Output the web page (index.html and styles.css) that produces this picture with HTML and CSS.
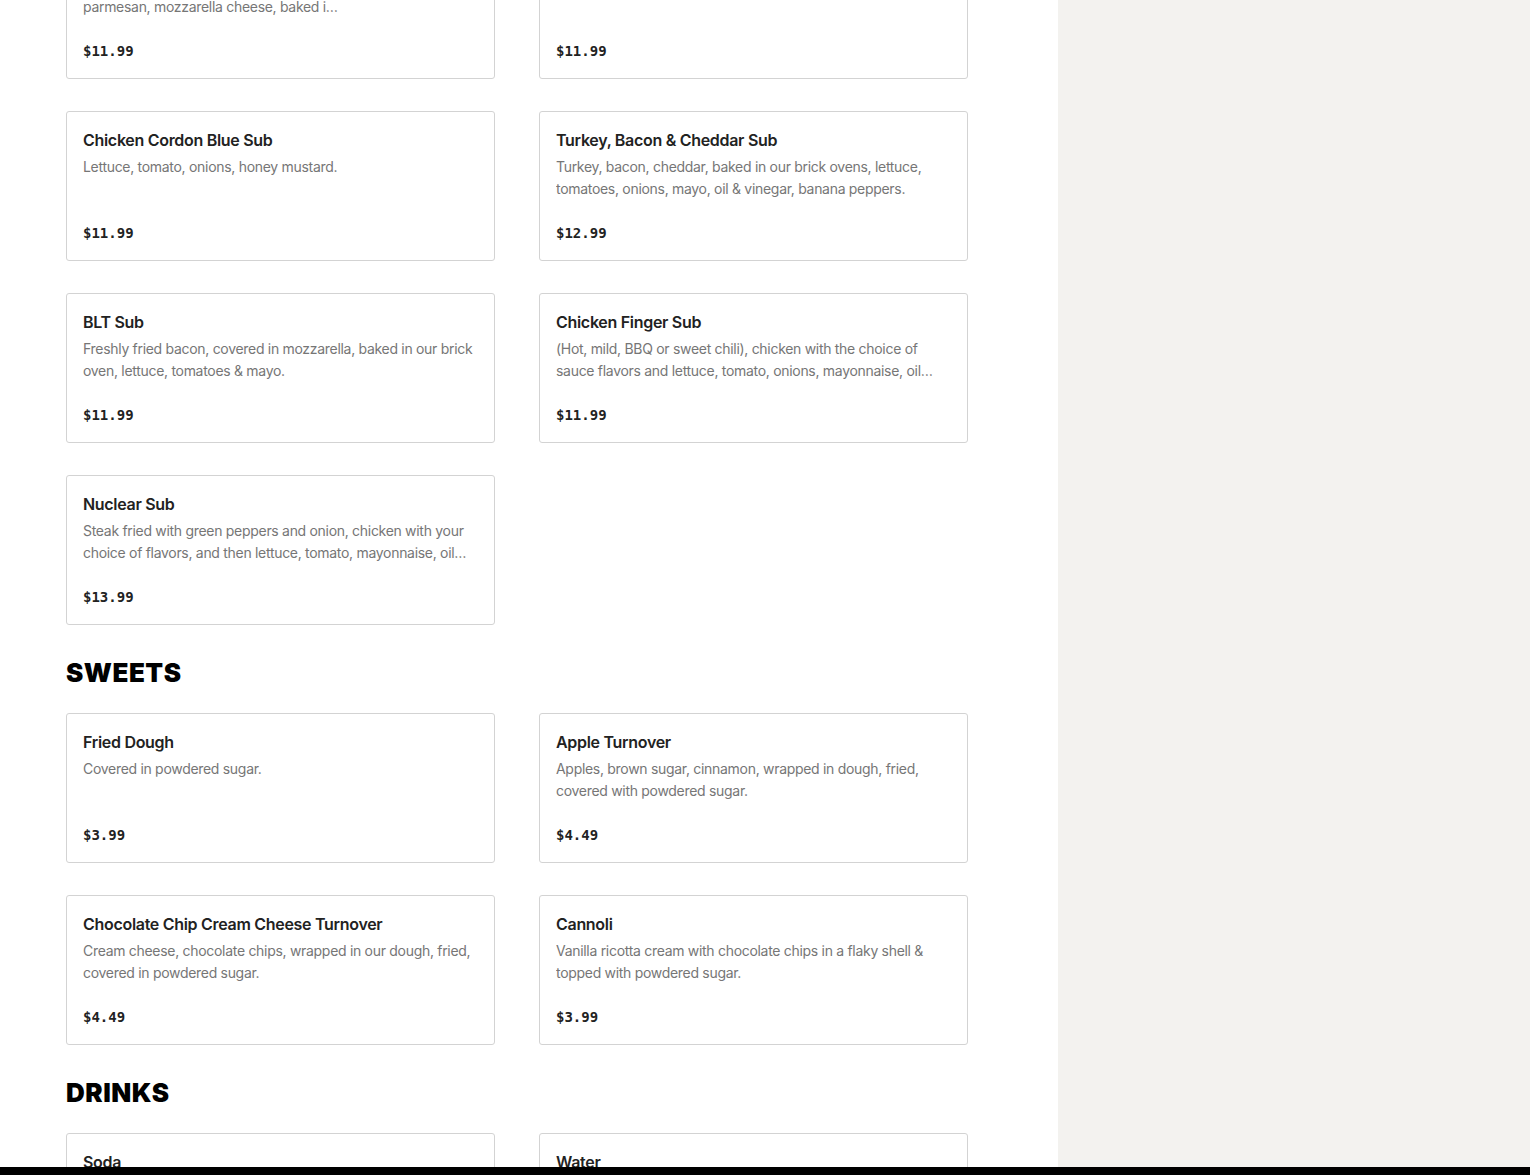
FILE: index.html
```html
<!DOCTYPE html>
<html lang="en">
<head>
<meta charset="utf-8">
<title>Menu</title>
<link rel="stylesheet" href="styles.css">
</head>
<body>
<div class="page">
  <main class="main">
    <div class="menu">
      <section class="category">
        <div class="grid">
          <div class="card">
            <div class="title">Chicken Parm Sub</div>
            <div class="desc">Fried chicken cutlet topped with our homemade marinara, parmesan, mozzarella cheese, baked i…</div>
            <div class="price">$11.99</div>
          </div>
          <div class="card">
            <div class="title">Eggplant Parm Sub</div>
            <div class="desc">Marinara sauce, parmesan, mozzarella cheese.</div>
            <div class="price">$11.99</div>
          </div>
          <div class="card">
            <div class="title">Chicken Cordon Blue Sub</div>
            <div class="desc">Lettuce, tomato, onions, honey mustard.</div>
            <div class="price">$11.99</div>
          </div>
          <div class="card">
            <div class="title">Turkey, Bacon &amp; Cheddar Sub</div>
            <div class="desc">Turkey, bacon, cheddar, baked in our brick ovens, lettuce, tomatoes, onions, mayo, oil &amp; vinegar, banana peppers.</div>
            <div class="price">$12.99</div>
          </div>
          <div class="card">
            <div class="title">BLT Sub</div>
            <div class="desc">Freshly fried bacon, covered in mozzarella, baked in our brick oven, lettuce, tomatoes &amp; mayo.</div>
            <div class="price">$11.99</div>
          </div>
          <div class="card">
            <div class="title">Chicken Finger Sub</div>
            <div class="desc">(Hot, mild, BBQ or sweet chili), chicken with the choice of sauce flavors and lettuce, tomato, onions, mayonnaise, oil…</div>
            <div class="price">$11.99</div>
          </div>
          <div class="card">
            <div class="title">Nuclear Sub</div>
            <div class="desc">Steak fried with green peppers and onion, chicken with your choice of flavors, and then lettuce, tomato, mayonnaise, oil…</div>
            <div class="price">$13.99</div>
          </div>
        </div>
      </section>

      <section class="category">
        <h2 class="cat-title">SWEETS</h2>
        <div class="grid">
          <div class="card">
            <div class="title">Fried Dough</div>
            <div class="desc">Covered in powdered sugar.</div>
            <div class="price">$3.99</div>
          </div>
          <div class="card">
            <div class="title">Apple Turnover</div>
            <div class="desc">Apples, brown sugar, cinnamon, wrapped in dough, fried, covered with powdered sugar.</div>
            <div class="price">$4.49</div>
          </div>
          <div class="card">
            <div class="title">Chocolate Chip Cream Cheese Turnover</div>
            <div class="desc">Cream cheese, chocolate chips, wrapped in our dough, fried, covered in powdered sugar.</div>
            <div class="price">$4.49</div>
          </div>
          <div class="card">
            <div class="title">Cannoli</div>
            <div class="desc">Vanilla ricotta cream with chocolate chips in a flaky shell &amp; topped with powdered sugar.</div>
            <div class="price">$3.99</div>
          </div>
        </div>
      </section>

      <section class="category">
        <h2 class="cat-title">DRINKS</h2>
        <div class="grid">
          <div class="card">
            <div class="title">Soda</div>
            <div class="desc">Coke, Diet Coke, Sprite, Ginger Ale.</div>
            <div class="price">$1.99</div>
          </div>
          <div class="card">
            <div class="title">Water</div>
            <div class="desc">Bottled water.</div>
            <div class="price">$1.49</div>
          </div>
        </div>
      </section>
    </div>
  </main>
  <aside class="side"></aside>
</div>
<div class="bottom-bar"></div>
</body>
</html>
```

FILE: styles.css
```css
html, body {
  margin: 0;
  padding: 0;
}
body {
  font-family: Inter, "Liberation Sans", Arial, sans-serif;
  color: #191919;
  background: #ffffff;
  overflow: hidden;
  height: 1175px;
}
.page {
  display: flex;
  min-height: 1175px;
}
.main {
  width: 1058px;
  flex: 0 0 1058px;
  background: #ffffff;
}
.side {
  flex: 1;
  background: #f3f2ef;
}
.menu {
  padding-left: 66px;
  margin-top: -71px;
}
.category + .category {
  margin-top: 32px;
}
.cat-title {
  margin: 0 0 24px;
  font-family: Inter, "DejaVu Sans", sans-serif;
  font-weight: 900;
  font-size: 26px;
  line-height: 32px;
  color: #000;
  letter-spacing: 0.5px;
}
.grid {
  display: grid;
  grid-template-columns: 429px 429px;
  column-gap: 44px;
  row-gap: 32px;
}
.card {
  border: 1px solid #d3d3d3;
  border-radius: 3px;
  padding: 16px;
  height: 150px;
  box-sizing: border-box;
  background: #fff;
}
.title {
  font-size: 16px;
  line-height: 24px;
  font-weight: 600;
  letter-spacing: -0.3px;
  color: #222222;
}
.desc {
  margin-top: 4px;
  font-size: 14px;
  line-height: 22px;
  letter-spacing: -0.3px;
  color: #767676;
  height: 44px;
  overflow: hidden;
}
.price {
  margin-top: 22px;
  font-family: "DejaVu Sans Mono", "Liberation Mono", monospace;
  font-weight: 700;
  font-size: 14px;
  line-height: 22px;
  color: #222222;
}
.bottom-bar {
  position: fixed;
  left: 0;
  right: 0;
  bottom: 0;
  height: 8px;
  background: #000;
}
```
